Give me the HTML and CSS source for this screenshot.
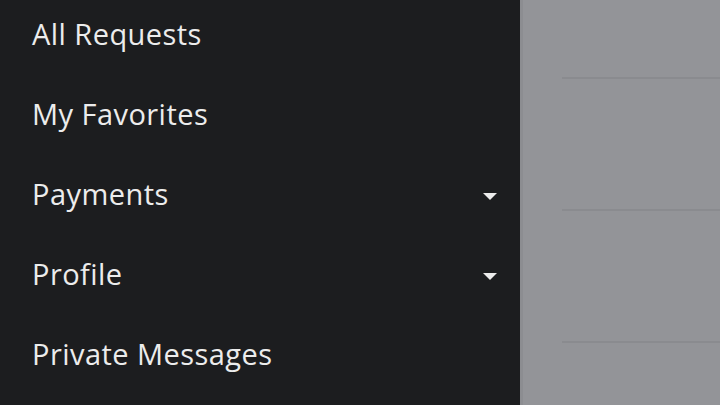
FILE: index.html
```html
<!DOCTYPE html>
<html>
<head>
<meta charset="utf-8">
<link rel="stylesheet" href="styles.css">
</head>
<body>
<div class="app">
  <nav class="sidebar">
    <a class="item">All Requests</a>
    <a class="item">My Favorites</a>
    <a class="item">Payments<svg class="caret" width="14" height="7" viewBox="0 0 14 7"><path d="M0 0H14L7 7Z" fill="#ececec"/></svg></a>
    <a class="item">Profile<svg class="caret" width="14" height="7" viewBox="0 0 14 7"><path d="M0 0H14L7 7Z" fill="#ececec"/></svg></a>
    <a class="item">Private Messages</a>
  </nav>
  <main class="content">
    <div class="row"></div>
    <div class="row"></div>
    <div class="row"></div>
  </main>
</div>
</body>
</html>
```
FILE: styles.css
```css
html, body { margin: 0; padding: 0; }
body { width: 720px; height: 405px; overflow: hidden; background: #939498; font-family: "Open Sans", "Lato", sans-serif; }
.app { display: flex; height: 405px; overflow: hidden; }
.sidebar { width: 520px; flex: none; background: #1c1d1f; display: flex; flex-direction: column; margin-top: -7px; }
.item { height: 80px; flex: none; display: flex; align-items: center; justify-content: space-between; padding: 0 23px 0 32px; color: #ececec; font-size: 29px; letter-spacing: 0.45px; }
.caret { flex: none; margin-top: 6px; }
.content { flex: 1; border-left: 3px solid #8c8d91; display: flex; flex-direction: column; padding-left: 39px; overflow: hidden; }
.row { height: 130px; border-bottom: 2px solid #8a8b8f; flex: none; }
.row:first-child { height: 77px; }
```
